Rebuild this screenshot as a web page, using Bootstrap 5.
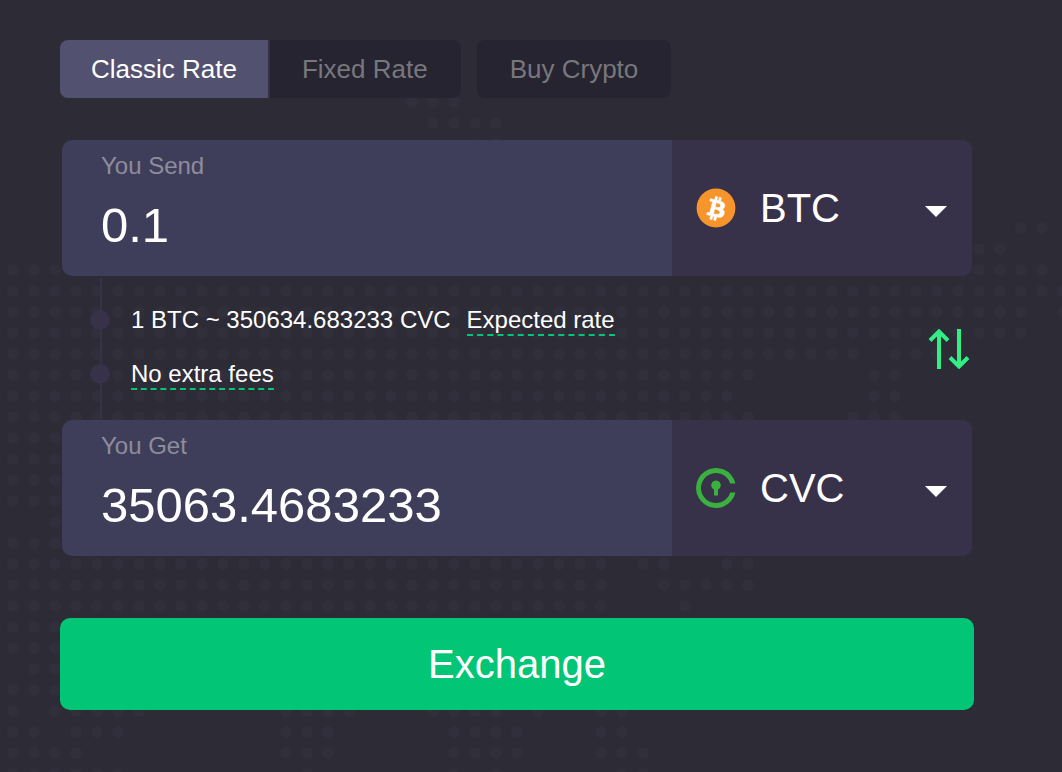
<!DOCTYPE html>
<html lang="en">
<head>
<meta charset="utf-8">
<meta name="viewport" content="width=device-width, initial-scale=1">
<title>Exchange</title>
<link href="https://cdn.jsdelivr.net/npm/bootstrap@5.3.0/dist/css/bootstrap.min.css" rel="stylesheet">
<style>
  body { background: #2c2b36; color: #fff; font-family: "Liberation Sans", Arial, sans-serif; min-height: 100vh; overflow-x: hidden; }
  .map-dots { z-index: -1; pointer-events: none; }
  .exchange { padding: 40px 88px 62px 60px; }
  .rate-tabs { margin-bottom: 42px; }
  .rate-tab { --bs-btn-color: #78777d; --bs-btn-bg: #252430; --bs-btn-hover-color: #fff; --bs-btn-hover-bg: #323044;
    --bs-btn-active-color: #fff; --bs-btn-active-bg: #525270; --bs-btn-border-width: 0; --bs-btn-border-radius: 8px;
    --bs-btn-padding-x: 33px; --bs-btn-padding-y: 9px; --bs-btn-font-size: 26px; line-height: 40px; }
  .rate-tab.active { padding-left: 31px; padding-right: 31px; border-right: 2px solid #343244; }
  .money { border-radius: 10px; background: #3f3e5a; margin: 0 2px; }
  .amount { padding: 12px 24px 23px 39px; }
  .amount label { font-size: 24px; line-height: 28px; color: #8e8c9d; margin-bottom: 17px; }
  .amount input { font-size: 49px; line-height: 56px; color: #fff; }
  .coin { width: 300px; padding: 0 25px 0 24px; gap: 24px; background: #373249; }
  .coin select { appearance: none; font-size: 40px; height: 136px; color: #fff;
    background: url("data:image/svg+xml,%3Csvg xmlns='http://www.w3.org/2000/svg' width='22' height='18'%3E%3Cpath d='M0 7h22L11 18z' fill='%23fff'/%3E%3C/svg%3E") right center no-repeat; }
  .coin option { background: #373249; }
  .steps { margin: 2px 0 2px 38px; padding: 15px 0 17px; border-left: 2px solid #373249; font-size: 24px; }
  .steps { margin-left: 40px; }
  .steps li { height: 54px; gap: 21px; }
  .bullet { width: 20px; height: 20px; margin-left: -12px; background: #373249; }
  .hint { color: #fff; text-decoration: none; line-height: 28px; padding-top: 2px; border-bottom: 2px dashed #02c575; }
  .hint:hover { color: #02c575; }
  .swap { margin-top: 2px; }
  .btn-exchange { --bs-btn-bg: #02c575; --bs-btn-color: #fff; --bs-btn-hover-bg: #05b36c; --bs-btn-hover-color: #fff;
    --bs-btn-border-width: 0; --bs-btn-border-radius: 10px; --bs-btn-font-size: 40px; --bs-btn-padding-y: 16px; line-height: 60px; margin-top: 62px; }
</style>
</head>
<body class="position-relative">

<!-- dotted world map -->
<svg class="map-dots position-absolute top-0 start-0" width="1080" height="772" fill="none" stroke="#312f3c" stroke-width="12" stroke-linecap="round" stroke-dasharray="0 21" aria-hidden="true">
  <path d="M412 102h43M433 123h64M475 144h22M1021 228h22M979 249h22M13 270h43M979 270h64"/>
  <path d="M13 291h1051M13 312h1009M1063 312h1M13 333h1009M13 354h841M895 354h43M13 375h736M874 375h22M13 396h715M874 396h22M13 417h736M853 417h43"/>
  <path d="M13 438h43M13 459h43M13 480h43M13 501h43M55 522h1M13 543h43M13 564h589M643 564h22M727 564h22M13 585h589M664 585h85M13 606h589M685 606h1"/>
  <path d="M13 627h43M13 648h43M34 669h22M13 690h43M13 711h1M55 711h85M286 711h64M433 711h64M538 711h1M601 711h22"/>
  <path d="M13 732h22M76 732h43M286 732h43M454 732h64M601 732h22M13 753h64M286 753h43M454 753h64M601 753h43M13 774h106M307 774h1M454 774h1M496 774h1M622 774h22"/>
</svg>

<main class="exchange">
  <div class="rate-tabs d-flex flex-wrap gap-3">
    <div class="btn-group">
      <button type="button" class="btn rate-tab active" aria-pressed="true">Classic Rate</button>
      <button type="button" class="btn rate-tab">Fixed Rate</button>
    </div>
    <button type="button" class="btn rate-tab">Buy Crypto</button>
  </div>

  <form>
    <div class="money d-flex overflow-hidden">
      <div class="amount d-flex flex-column flex-fill">
        <label for="send">You Send</label>
        <input id="send" type="text" inputmode="decimal" class="form-control-plaintext p-0 border-0" value="0.1">
      </div>
      <div class="coin d-flex align-items-center flex-shrink-0">
        <svg class="flex-shrink-0" width="40" height="40" viewBox="0 0 33 33" aria-hidden="true">
          <circle cx="16.500" cy="16.500" r="16" fill="#f7952c"/>
          <path transform="translate(.5 .9)" fill="#fff" stroke="#fff" stroke-width=".5" d="M23.189 14.02c.314-2.096-1.283-3.223-3.465-3.975l.708-2.84-1.728-.43-.69 2.765c-.454-.114-.92-.22-1.385-.326l.695-2.783L15.596 6l-.708 2.839c-.376-.086-.746-.17-1.104-.26l.002-.009-2.384-.595-.46 1.846s1.283.294 1.256.312c.7.175.826.638.805 1.006l-.806 3.235c.048.012.11.03.18.057l-.183-.045-1.13 4.532c-.086.212-.303.531-.793.41.018.025-1.256-.313-1.256-.313l-.858 1.978 2.25.561c.418.105.828.215 1.231.318l-.715 2.872 1.727.43.708-2.84c.472.127.93.245 1.378.357l-.706 2.828 1.728.43.715-2.866c2.948.558 5.164.333 6.097-2.333.752-2.146-.037-3.385-1.588-4.192 1.13-.26 1.98-1.003 2.207-2.538zm-3.95 5.538c-.533 2.147-4.148.986-5.32.695l.95-3.805c1.172.293 4.929.872 4.37 3.11zm.535-5.569c-.487 1.953-3.495.96-4.47.717l.86-3.45c.975.243 4.118.696 3.61 2.733z"/>
        </svg>
        <select class="flex-fill p-0 border-0" aria-label="Currency you send">
          <option selected>BTC</option>
          <option>CVC</option>
        </select>
      </div>
    </div>

    <div class="d-flex justify-content-between align-items-center">
      <ul class="steps list-unstyled">
        <li class="d-flex align-items-center">
          <span class="bullet rounded-circle"></span>
          <span class="d-flex align-items-center gap-3"><span>1 BTC ~ 350634.683233 CVC</span><a href="#" class="hint">Expected rate</a></span>
        </li>
        <li class="d-flex align-items-center">
          <span class="bullet rounded-circle"></span>
          <a href="#" class="hint">No extra fees</a>
        </li>
      </ul>
      <button type="button" class="swap btn border-0 p-0 me-1" aria-label="Swap currencies">
        <svg class="d-block" width="42" height="40" viewBox="0 0 42 40" fill="none" stroke="#31ee85" stroke-width="4" aria-hidden="true">
          <path d="M11 40V3M2 11.500l9-9 9 9M31 0v37M22 28.500l9 9 9-9"/>
        </svg>
      </button>
    </div>

    <div class="money d-flex overflow-hidden">
      <div class="amount d-flex flex-column flex-fill">
        <label for="get">You Get</label>
        <input id="get" type="text" class="form-control-plaintext p-0 border-0" value="35063.4683233">
      </div>
      <div class="coin d-flex align-items-center flex-shrink-0">
        <svg class="flex-shrink-0" width="40" height="40" viewBox="0 0 40 40" fill="#3ab03e" aria-hidden="true">
          <path d="M39.500 15.500A20 20 0 1 0 39.500 24.500H34.300A15 15 0 1 1 34.300 15.500z"/>
          <path d="M18 21.600a4.800 4.800 0 1 1 4 0V27.500h-4z"/>
        </svg>
        <select class="flex-fill p-0 border-0" aria-label="Currency you get">
          <option>BTC</option>
          <option selected>CVC</option>
        </select>
      </div>
    </div>

    <button type="submit" class="btn btn-exchange w-100">Exchange</button>
  </form>
</main>

<script src="https://cdn.jsdelivr.net/npm/bootstrap@5.3.0/dist/js/bootstrap.bundle.min.js"></script>
</body>
</html>
